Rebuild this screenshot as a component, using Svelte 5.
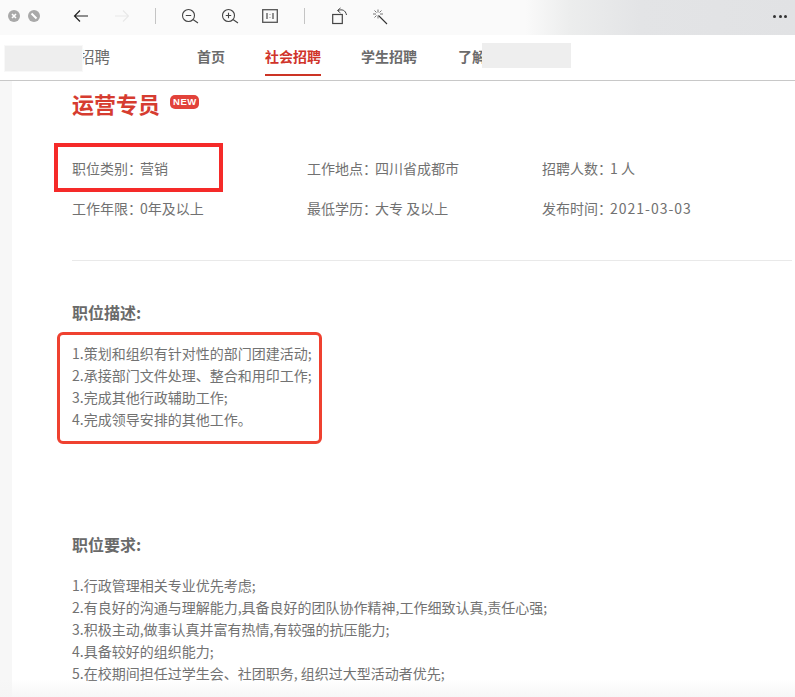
<script>
  const colon = '\uFF1A';
  const meta = [
    ['职位类别', '营销'], ['工作地点', '四川省成都市'], ['招聘人数', '1 人'],
    ['工作年限', '0年及以上'], ['最低学历', '大专 及以上'], ['发布时间', '2021-03-03']
  ];
  const desc = ['1.策划和组织有针对性的部门团建活动;', '2.承接部门文件处理、整合和用印工作;', '3.完成其他行政辅助工作;', '4.完成领导安排的其他工作。'];
  const req = ['1.行政管理相关专业优先考虑;', '2.有良好的沟通与理解能力,具备良好的团队协作精神,工作细致认真,责任心强;', '3.积极主动,做事认真并富有热情,有较强的抗压能力;', '4.具备较好的组织能力;', '5.在校期间担任过学生会、社团职务, 组织过大型活动者优先;'];
</script>

<div class="page">
  <header class="toolbar">
    <div class="lights">
      <svg width="12" height="12" viewBox="0 0 12 12"><circle cx="6" cy="6" r="6" fill="#a9a9a9"/><path d="M4 4l4 4M8 4l-4 4" stroke="#fff" stroke-width="1.6"/></svg>
      <svg width="12" height="12" viewBox="0 0 12 12"><circle cx="6" cy="6" r="6" fill="#a9a9a9"/><path d="M3.500 3.500l5 5" stroke="#fff" stroke-width="2"/></svg>
    </div>
    <svg class="i back" width="16" height="14" viewBox="0 0 16 14"><path d="M15 7H1.500M7 1.500L1.500 7 7 12.500" fill="none" stroke="#222" stroke-width="1.200"/></svg>
    <svg class="i fwd" width="16" height="14" viewBox="0 0 16 14"><path d="M1 7h13.500M9 1.500L14.500 7 9 12.500" fill="none" stroke="#e8e8e8" stroke-width="1.100"/></svg>
    <span class="sep s1"></span>
    <svg class="i zo" width="18" height="18" viewBox="0 0 18 18"><circle cx="7.500" cy="7.500" r="6" fill="none" stroke="#444" stroke-width="1.100"/><path d="M4.800 7.500h5.400M12 11.500l5 3.500" stroke="#444" stroke-width="1.100" fill="none"/></svg>
    <svg class="i zi" width="18" height="18" viewBox="0 0 18 18"><circle cx="7.500" cy="7.500" r="6" fill="none" stroke="#444" stroke-width="1.100"/><path d="M4.800 7.500h5.400M7.500 4.800v5.400M12 11.500l5 3.500" stroke="#444" stroke-width="1.100" fill="none"/></svg>
    <svg class="i fit" width="16" height="14" viewBox="0 0 16 14"><rect x=".7" y=".7" width="14.600" height="12.600" fill="none" stroke="#555" stroke-width="1.300"/><path d="M5 4v6M11 4v6" stroke="#777" stroke-width="1.600"/><path d="M8 5v1M8 8v1" stroke="#999" stroke-width="1"/></svg>
    <span class="sep s2"></span>
    <svg class="i rot" width="16" height="18" viewBox="0 0 16 18"><rect x=".7" y="7.500" width="9.600" height="9" fill="none" stroke="#444" stroke-width="1.200"/><path d="M6 3.500c4-1.500 7.500-.5 8.500 4.500M8.500 1L5.500 3.500l3 2.500" fill="none" stroke="#444" stroke-width="1"/></svg>
    <svg class="i wand" width="16" height="16" viewBox="0 0 16 16"><path d="M6.500 6.500l8.500 8.500" stroke="#333" stroke-width="1.100"/><path d="M6 .5v3M6 6.500v3M1 5h3M8 5h3M2.500 1.500l2 2M9.500 1.500l-2 2M2.500 8.500l2-2" stroke="#666" stroke-width=".9"/></svg>
    <div class="more"><i></i><i></i><i></i></div>
  </header>

  <nav class="nav">
    <span class="brand">招聘</span>
    <a href="#home">首页</a>
    <a href="#social" class="active">社会招聘</a>
    <a href="#student">学生招聘</a>
    <a href="#about">了解</a>
    <span class="mask m1"></span>
    <span class="mask m2"></span>
  </nav>

  <main class="body">
    <div class="title-row">
      <h1>运营专员</h1>
      <span class="new">NEW</span>
    </div>
    <div class="meta">
      {#each meta as [label, value]}<div>{label}{colon}<span class="value">{value}</span></div>{/each}
    </div>
    <hr />
    <h2 class="h-desc">职位描述:</h2>
    <div class="list">{#each desc as d}<p>{d}</p>{/each}</div>
    <h2 class="h-req">职位要求:</h2>
    <div class="list">{#each req as d}<p>{d}</p>{/each}</div>
    <span class="box box1"></span>
    <span class="box box2"></span>
  </main>
  <div class="fade"></div>
</div>

<style>
  :global(body) { margin: 0; background: #fff; }
  .page {
    position: relative; width: 795px; height: 697px; overflow: hidden;
    font-family: "Noto Sans CJK SC", "Liberation Sans", sans-serif; color: #6e6e6e;
  }
  .toolbar {
    position: relative; height: 35px;
    background: linear-gradient(90deg, #fafafa 0, #fafafa 525px, #eceded 570px, #e3e4e6 640px, #e1e2e4 100%);
  }
  .toolbar > * { position: absolute; }
  .lights { left: 8px; top: 10px; display: flex; gap: 8px; }
  .lights svg { display: block; }
  .back { left: 73px; top: 9px; }
  .fwd { left: 114px; top: 9px; }
  .sep { width: 1px; height: 16px; background: #c4c4c4; top: 8px; }
  .s1 { left: 155px; }
  .s2 { left: 304px; }
  .zo { left: 181px; top: 8px; }
  .zi { left: 221px; top: 8px; }
  .fit { left: 262px; top: 9px; }
  .rot { left: 332px; top: 7px; }
  .wand { left: 372px; top: 9px; }
  .more { left: 773px; top: 15px; display: flex; gap: 2.500px; }
  .more i { width: 3px; height: 3px; border-radius: 50%; background: #333; }

  .nav {
    position: relative; height: 45px; border-bottom: 1px solid #c8c8c8;
    font-size: 14px; font-weight: 700;
  }
  .nav a { position: absolute; top: 0; height: 45px; line-height: 42px; color: #6b6b6b; text-decoration: none; }
  .nav a:nth-of-type(1) { left: 197px; }
  .nav a:nth-of-type(2) { left: 265px; color: #d0342a; }
  .nav a:nth-of-type(2)::after { content: ""; position: absolute; left: 0; right: 0; bottom: 4px; height: 2px; background: #cc3425; }
  .nav a:nth-of-type(3) { left: 361px; }
  .nav a:nth-of-type(4) { left: 458px; }
  .brand { position: absolute; left: 79px; top: 0; line-height: 42px; font-size: 15.500px; font-weight: 400; color: #6b6b6b; }
  .mask { position: absolute; background: #eeeeee; }
  .m1 { left: 5px; top: 11px; width: 77px; height: 25px; box-shadow: 0 0 0 1px #f8f8f8; }
  .m2 { left: 482px; top: 8px; width: 89px; height: 25px; }

  .body { position: relative; height: 616px; border-left: 12px solid #f7f7f7; box-sizing: border-box; padding-left: 60px; }
  .title-row { display: flex; align-items: center; gap: 10px; height: 46px; }
  h1 { margin: 0 0 2px; font-size: 22px; line-height: 44px; font-weight: 700; color: #d63c30; }
  .new {
    background: #e2423a; color: #fff; font: 700 9.500px/14px "Liberation Sans", sans-serif; letter-spacing: .5px;
    border-radius: 5px; padding: 0 2px 0 3px; height: 14px; margin-top: -4px;
  }
  .meta {
    display: grid; grid-template-columns: 235px 235px 235px; grid-auto-rows: 40px; margin-top: 21px;
    font-size: 14px; line-height: 40px; color: #717171;
  }
  .value { margin-left: -2px; }
  .meta div:last-child .value { letter-spacing: 1px; }
  hr { border: 0; height: 1px; background: #e9e9e9; margin: 32px 3px 0 0; }
  h2 { margin: 0; font-size: 16px; font-weight: 700; line-height: 24px; color: #6a6a6a; }
  .h-desc { margin-top: 39px; margin-bottom: 18px; }
  .h-req { margin-top: 102px; margin-bottom: 18px; }
  .list p { margin: 0; font-size: 14px; line-height: 22px; color: #727272; white-space: nowrap; }
  .box { position: absolute; box-sizing: border-box; }
  .box1 { left: 42px; top: 62px; width: 169px; height: 49px; border: 4px solid #f52a29; }
  .box2 { left: 45px; top: 251px; width: 265px; height: 112px; border: 3px solid #ef4130; border-radius: 6px; }
  .fade { position: absolute; left: 0; right: 0; bottom: 0; height: 18px; background: linear-gradient(rgba(245,245,245,0), rgba(245,245,245,.9)); }
</style>
